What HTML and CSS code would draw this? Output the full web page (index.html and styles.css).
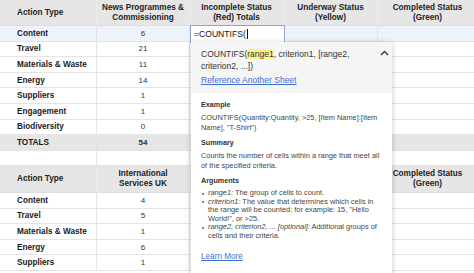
FILE: index.html
```html
<!DOCTYPE html>
<html>
<head>
<meta charset="utf-8">
<link rel="stylesheet" href="styles.css">
</head>
<body>
<div class="sheet">
  <div class="grid">
    <div class="cell hd left">Action Type</div>
    <div class="cell hd">News Programmes &amp; Commissioning</div>
    <div class="cell hd">Incomplete Status (Red) Totals</div>
    <div class="cell hd">Underway Status (Yellow)</div>
    <div class="cell hd">Completed Status (Green)</div>

    <div class="cell sel label">Content</div><div class="cell sel num">6</div><div class="cell sel"></div><div class="cell sel"></div><div class="cell sel"></div>
    <div class="cell label">Travel</div><div class="cell num">21</div><div class="cell"></div><div class="cell"></div><div class="cell"></div>
    <div class="cell label">Materials &amp; Waste</div><div class="cell num">11</div><div class="cell"></div><div class="cell"></div><div class="cell"></div>
    <div class="cell label">Energy</div><div class="cell num">14</div><div class="cell"></div><div class="cell"></div><div class="cell"></div>
    <div class="cell label">Suppliers</div><div class="cell num">1</div><div class="cell"></div><div class="cell"></div><div class="cell"></div>
    <div class="cell label">Engagement</div><div class="cell num">1</div><div class="cell"></div><div class="cell"></div><div class="cell"></div>
    <div class="cell label">Biodiversity</div><div class="cell num">0</div><div class="cell"></div><div class="cell"></div><div class="cell"></div>
    <div class="cell tot label">TOTALS</div><div class="cell tot num bold">54</div><div class="cell tot"></div><div class="cell tot"></div><div class="cell tot"></div>
    <div class="cell"></div><div class="cell"></div><div class="cell"></div><div class="cell"></div><div class="cell"></div>

    <div class="cell hd hd2 left">Action Type</div>
    <div class="cell hd hd2">International Services UK</div>
    <div class="cell hd hd2"></div>
    <div class="cell hd hd2"></div>
    <div class="cell hd hd2">Completed Status (Green)</div>

    <div class="cell label">Content</div><div class="cell num">4</div><div class="cell"></div><div class="cell"></div><div class="cell"></div>
    <div class="cell label">Travel</div><div class="cell num">5</div><div class="cell"></div><div class="cell"></div><div class="cell"></div>
    <div class="cell label">Materials &amp; Waste</div><div class="cell num">1</div><div class="cell"></div><div class="cell"></div><div class="cell"></div>
    <div class="cell label">Energy</div><div class="cell num">6</div><div class="cell"></div><div class="cell"></div><div class="cell"></div>
    <div class="cell label">Suppliers</div><div class="cell num">1</div><div class="cell"></div><div class="cell"></div><div class="cell"></div>
  </div>

  <div class="editor">=COUNTIFS(<span class="cursor"></span></div>

  <div class="popup">
    <div class="pop-top">
      <div class="sig">COUNTIFS(<span class="hl">range1</span>, criterion1, [range2, criterion2, ...])</div>
      <svg class="chev" width="9" height="6" viewBox="0 0 9 6"><path d="M1 5 L4.5 1.5 L8 5" fill="none" stroke="#333" stroke-width="1.4"/></svg>
      <a class="link ref">Reference Another Sheet</a>
    </div>
    <div class="pop-body">
      <div class="sec-title">Example</div>
      <div class="para">COUNTIFS(Quantity:Quantity, &gt;25, [Item Name]:[Item Name], "T-Shirt")</div>
      <div class="sec-title">Summary</div>
      <div class="para">Counts the number of cells within a range that meet all of the specified criteria.</div>
      <div class="sec-title">Arguments</div>
      <ul class="args">
        <li><i>range1:</i> The group of cells to count.</li>
        <li><i>criterion1:</i> The value that determines which cells in the range will be counted; for example: 15, "Hello World!", or &gt;25.</li>
        <li><i>range2, criterion2, ... [optional]:</i> Additional groups of cells and their criteria.</li>
      </ul>
      <a class="link learn">Learn More</a>
    </div>
  </div>
</div>
</body>
</html>
```

FILE: styles.css
```css
html, body {
  margin: 0;
  padding: 0;
  background: #fff;
}
body {
  width: 474px;
  height: 273px;
  overflow: hidden;
  font-family: "Liberation Sans", Arial, sans-serif;
  color: #222;
}
.sheet {
  position: relative;
  width: 474px;
  height: 273px;
  overflow: hidden;
}
.grid {
  display: grid;
  grid-template-columns: 97px 93px 94px 94px 100px;
  grid-template-rows: 26px repeat(9, 15.6px) 26.6px repeat(6, 15.6px);
}
.cell {
  box-sizing: border-box;
  border-right: 1px solid #e4e4e4;
  border-bottom: 1px solid #e4e4e4;
  font-size: 8px;
  display: flex;
  align-items: center;
  justify-content: center;
  text-align: center;
  overflow: hidden;
  white-space: nowrap;
}
.hd {
  background: #e6e6e6;
  font-weight: bold;
  font-size: 8.2px;
  line-height: 10px;
  white-space: normal;
  color: #222;
  border-right-color: #ececec;
  border-bottom-color: #dedede;
  padding: 0 4px;
}
.hd.left {
  justify-content: flex-start;
  padding-left: 17px;
}
.label {
  justify-content: flex-start;
  padding-left: 17px;
  font-weight: bold;
  font-size: 8.2px;
  color: #1a1a1a;
}
.num {
  color: #333;
}
.bold {
  font-weight: bold;
}
.sel {
  background: #eef2fa;
}
.tot {
  background: #e6e6e6;
}
.editor {
  position: absolute;
  left: 190px;
  top: 25px;
  width: 95px;
  height: 18px;
  box-sizing: border-box;
  border: 1px solid #8ea4d2;
  background: #fff;
  font-size: 8.6px;
  color: #111;
  padding-left: 3px;
  display: flex;
  align-items: center;
}
.cursor {
  display: inline-block;
  width: 1px;
  height: 10px;
  background: #111;
  margin-left: 1px;
}
.popup {
  position: absolute;
  left: 191px;
  top: 42px;
  width: 201px;
  height: 250px;
  background: #fff;
  box-shadow: 0 1px 6px rgba(0, 0, 0, 0.22);
}
.pop-top {
  position: relative;
  background: #f5f5f5;
  padding: 6px 24px 5px 10px;
  height: 51px;
  box-sizing: border-box;
}
.sig {
  font-size: 8.5px;
  line-height: 12px;
  color: #333;
}
.hl {
  background: #fff38a;
}
.chev {
  position: absolute;
  right: 3px;
  top: 8px;
}
.link {
  color: #3d6fd1;
  text-decoration: underline;
  display: block;
}
.ref {
  font-size: 8.5px;
  margin-top: 2px;
  line-height: 12px;
}
.pop-body {
  padding: 7px 10px 0 10px;
}
.sec-title {
  font-size: 7.2px;
  font-weight: bold;
  color: #333;
  line-height: 10px;
  margin-bottom: 3px;
}
.para {
  font-size: 7.4px;
  line-height: 10px;
  color: #444;
  margin-bottom: 5px;
}
.args {
  margin: 0 0 11px 0;
  padding: 0 0 0 1px;
  list-style: none;
  font-size: 7.4px;
  line-height: 8.6px;
  color: #444;
}
.args li {
  position: relative;
  padding-left: 6px;
}
.args li::before {
  content: "";
  position: absolute;
  left: 0;
  top: 3.5px;
  width: 2px;
  height: 2px;
  border-radius: 50%;
  background: #555;
}
.learn {
  font-size: 8.2px;
  line-height: 10px;
}
```
